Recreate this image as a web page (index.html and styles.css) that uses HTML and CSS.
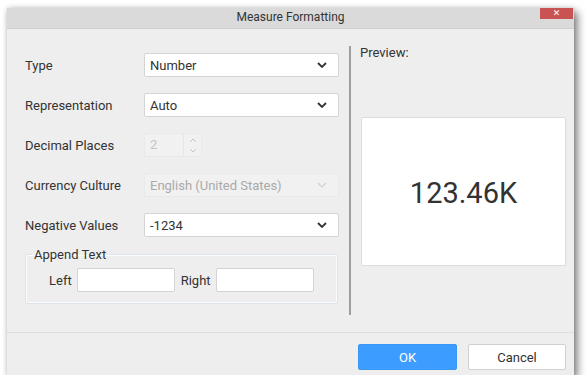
FILE: index.html
```html
<!DOCTYPE html>
<html>
<head>
<meta charset="utf-8">
<link rel="stylesheet" href="styles.css">
</head>
<body>
<div class="dialog">
  <div class="titlebar">
    <span class="title">Measure Formatting</span>
    <span class="close">✕</span>
  </div>
  <div class="content">
    <div class="left">
      <div class="row">
        <span class="label">Type</span>
        <div class="select"><span>Number</span><svg class="chev" width="10" height="6" viewBox="0 0 10 6"><path d="M1 1 L5 5 L9 1" fill="none" stroke="#333" stroke-width="1.8"/></svg></div>
      </div>
      <div class="row">
        <span class="label">Representation</span>
        <div class="select"><span>Auto</span><svg class="chev" width="10" height="6" viewBox="0 0 10 6"><path d="M1 1 L5 5 L9 1" fill="none" stroke="#333" stroke-width="1.8"/></svg></div>
      </div>
      <div class="row">
        <span class="label">Decimal Places</span>
        <div class="numeric">
          <span class="numval">2</span>
          <div class="spin">
            <svg width="8" height="5" viewBox="0 0 8 5"><path d="M1 4 L4 1 L7 4" fill="none" stroke="#c4c4c4" stroke-width="1"/></svg>
            <svg width="8" height="5" viewBox="0 0 8 5"><path d="M1 1 L4 4 L7 1" fill="none" stroke="#c4c4c4" stroke-width="1"/></svg>
          </div>
        </div>
      </div>
      <div class="row">
        <span class="label">Currency Culture</span>
        <div class="select disabled"><span>English (United States)</span><svg class="chev" width="10" height="6" viewBox="0 0 10 6"><path d="M1 1 L5 5 L9 1" fill="none" stroke="#d0d0d0" stroke-width="1.2"/></svg></div>
      </div>
      <div class="row">
        <span class="label">Negative Values</span>
        <div class="select"><span>-1234</span><svg class="chev" width="10" height="6" viewBox="0 0 10 6"><path d="M1 1 L5 5 L9 1" fill="none" stroke="#333" stroke-width="1.8"/></svg></div>
      </div>
      <fieldset class="append">
        <legend>Append Text</legend>
        <div class="append-row">
          <span class="alabel">Left</span>
          <div class="textbox"></div>
          <span class="alabel">Right</span>
          <div class="textbox"></div>
        </div>
      </fieldset>
    </div>
    <div class="sep"></div>
    <div class="right">
      <div class="plabel">Preview:</div>
      <div class="preview">123.46K</div>
    </div>
  </div>
  <div class="footer">
    <div class="btn ok">OK</div>
    <div class="btn cancel">Cancel</div>
  </div>
</div>
</body>
</html>
```
FILE: styles.css
```css
html, body {
  margin: 0;
  padding: 0;
  background: #ffffff;
}
body {
  font-family: Roboto, "Liberation Sans", sans-serif;
  color: #333333;
  padding: 8px 0 0 7px;
}
.dialog {
  width: 567px;
  height: 367px;
  background: #eeeeee;
  box-shadow: 0 0 5px rgba(0,0,0,0.18), 4px 4px 8px rgba(0,0,0,0.45);
  display: flex;
  flex-direction: column;
}
.titlebar {
  position: relative;
  height: 21px;
  box-sizing: border-box;
  background: #dadada;
  border-bottom: 1px solid #cfcfcf;
  display: flex;
  align-items: center;
  justify-content: center;
}
.title {
  font-size: 12px;
  color: #333;
  margin-top: -2px;
}
.close {
  position: absolute;
  top: 0;
  right: 1px;
  width: 33px;
  height: 11px;
  background: #c95353;
  color: #fff;
  font-size: 9px;
  line-height: 10px;
  text-align: center;
  font-family: "DejaVu Sans", sans-serif;
}
.content {
  height: 303px;
  display: flex;
}
.left {
  width: 314px;
  margin-left: 18px;
  padding-top: 24px;
  display: flex;
  flex-direction: column;
  gap: 16px;
}
.row {
  display: flex;
  align-items: center;
  height: 24px;
}
.label {
  width: 119px;
  font-size: 13px;
  color: #333;
}
.select {
  width: 195px;
  height: 24px;
  box-sizing: border-box;
  background: #fff;
  border: 1px solid #d4d4d4;
  border-radius: 2px;
  display: flex;
  align-items: center;
  justify-content: space-between;
  padding: 0 11px 0 5px;
  font-size: 13px;
  color: #333;
}
.select.disabled {
  background: #f1f1f1;
  border-color: #e9e9e9;
  color: #a9a9a9;
}
.numeric {
  width: 58px;
  height: 24px;
  box-sizing: border-box;
  background: #f1f1f1;
  border: 1px solid #e9e9e9;
  border-radius: 2px;
  display: flex;
  font-size: 13px;
  color: #c4c4c4;
}
.numval {
  width: 38px;
  padding-left: 5px;
  box-sizing: border-box;
  line-height: 22px;
}
.spin {
  flex: 1;
  border-left: 1px solid #e6e6e6;
  display: flex;
  flex-direction: column;
  align-items: center;
  justify-content: center;
  gap: 5px;
}
.spin svg { display: block; }
.append {
  margin: -6px 0 0 0;
  width: 313px;
  box-sizing: border-box;
  border: 1px solid #dfe4ea;
  box-shadow: inset 0 0 0 1px #fafcfd;
  border-radius: 2px;
  padding: 6px 0 11px 0;
}
.append legend {
  font-size: 13px;
  color: #333;
  padding: 0 4px 0 2px;
  margin-left: 6px;
  line-height: 15px;
}
.append-row {
  display: flex;
  align-items: center;
  height: 24px;
  padding-left: 23px;
}
.alabel {
  font-size: 13px;
  color: #333;
  margin-right: 5px;
}
.textbox {
  width: 98px;
  height: 24px;
  box-sizing: border-box;
  background: #fff;
  border: 1px solid #d4d4d4;
  border-radius: 2px;
  margin-right: 6px;
}
.sep {
  width: 2px;
  background: #9e9e9e;
  margin: 17px 0 17px 10px;
}
.right {
  margin-left: 9px;
  width: 206px;
  padding-top: 16px;
  display: flex;
  flex-direction: column;
}
.plabel {
  font-size: 13px;
  line-height: 15px;
  color: #333;
}
.preview {
  margin-top: 57px;
  margin-left: 1px;
  width: 205px;
  height: 149px;
  box-sizing: border-box;
  background: #fff;
  border: 1px solid #dcdcdc;
  border-radius: 2px;
  display: flex;
  align-items: center;
  justify-content: center;
  font-size: 29px;
  color: #333;
  padding-top: 3px;
}
.footer {
  flex: 1;
  border-top: 1px solid #dddddd;
  display: flex;
  justify-content: flex-end;
  align-items: flex-start;
  padding: 11px 8px 0 0;
  gap: 11px;
}
.btn {
  height: 26px;
  box-sizing: border-box;
  border-radius: 2px;
  display: flex;
  align-items: center;
  justify-content: center;
  font-size: 13px;
}
.ok {
  width: 99px;
  background: #3d9cff;
  border: 1px solid #3a96f5;
  color: #fff;
}
.cancel {
  width: 98px;
  background: #fff;
  border: 1px solid #d0d0d0;
  color: #333;
}
```
